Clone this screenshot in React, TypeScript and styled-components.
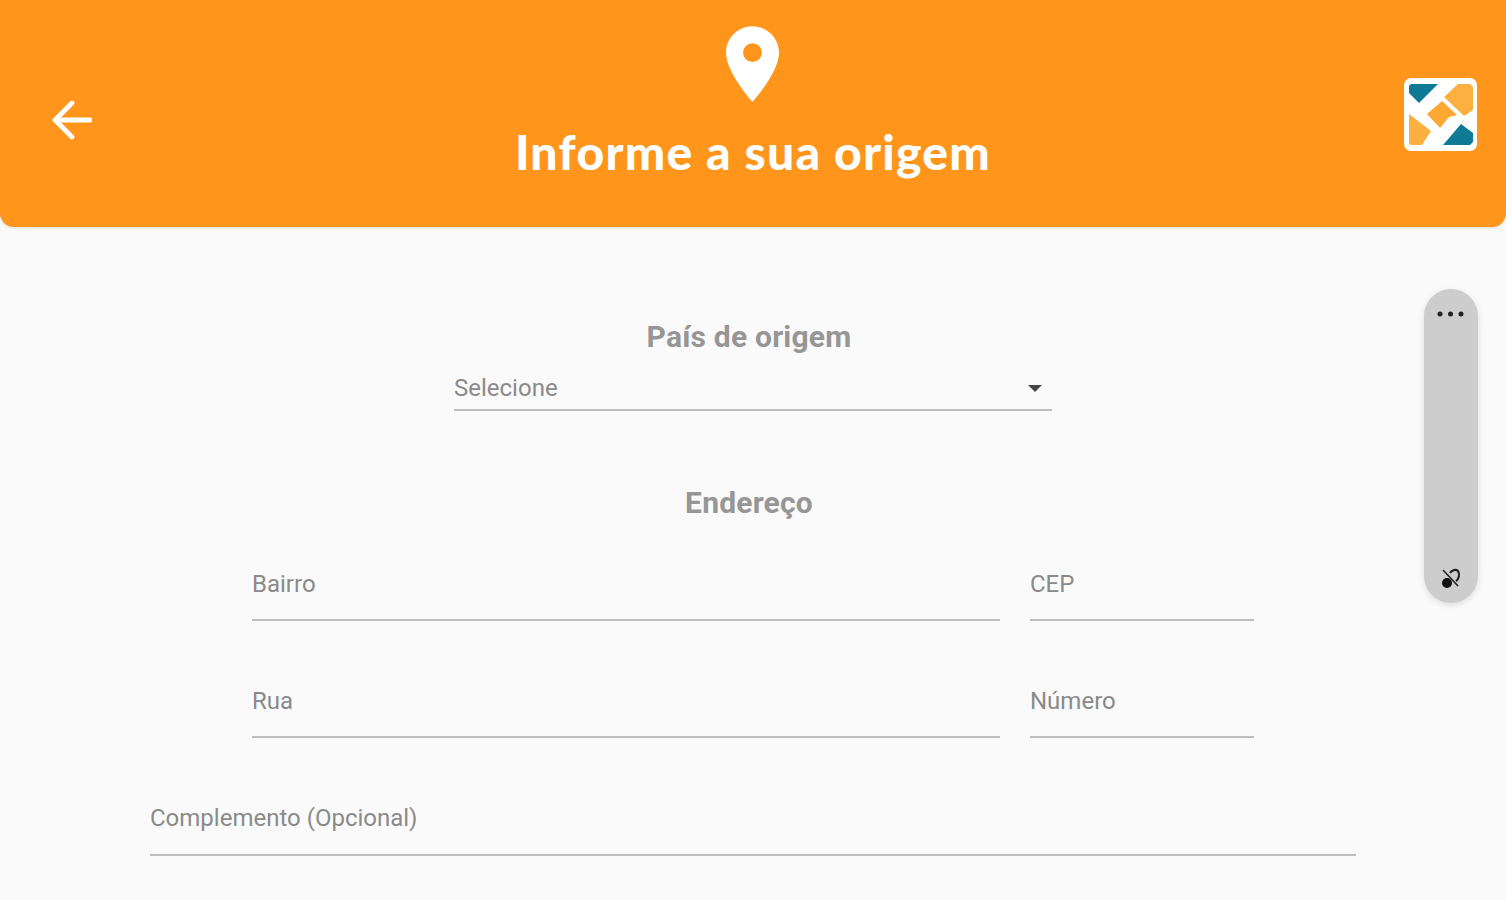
import React from "react";
import styled, { createGlobalStyle } from "styled-components";

const GlobalStyle = createGlobalStyle`
  html, body {
    margin: 0;
    padding: 0;
    height: 100%;
    overflow: hidden;
    background: #fafafa;
    font-family: Roboto, "Liberation Sans", sans-serif;
  }
`;

const App: React.FC = () => {
  return (
    <Page>
      <GlobalStyle />
      <Header>
        <BackButton aria-label="Voltar">
          <svg width="40" height="40" viewBox="0 0 40 40" fill="none" stroke="#fff" strokeWidth="4.8" strokeLinecap="round" strokeLinejoin="round">
            <path d="M3 20H38" />
            <path d="M20 3L3 20L20 37" />
          </svg>
        </BackButton>
        <HeaderCenter>
          <svg width="53" height="76" viewBox="5 2 14 20" fill="#fff">
            <path d="M12 2C8.13 2 5 5.13 5 9c0 5.25 7 13 7 13s7-7.75 7-13c0-3.87-3.13-7-7-7zm0 9.5a2.5 2.5 0 010-5 2.5 2.5 0 010 5z" />
          </svg>
          <Title>Informe a sua origem</Title>
        </HeaderCenter>
        <Logo viewBox="0 0 73 73">
          <rect width="73" height="73" rx="7" fill="#fff" />
          <path d="M7 6H34L15 25L5 15V8Z" fill="#0f7a96" />
          <path d="M57 46L69 55V64L66 67H39Z" fill="#0f7a96" />
          <path d="M5 36L27 53L18 67H7L5 65Z" fill="#fdb03f" />
          <path d="M54 6H66L69 9V32L60 38L40 19Z" fill="#fdb03f" />
          <path d="M23 36L38 23L53 37L45 39L36 50Z" fill="#fda833" />
        </Logo>
      </Header>

      <Form>
        <SectionTitle>País de origem</SectionTitle>
        <SelectField>
          <FieldLabel>Selecione</FieldLabel>
          <Caret />
        </SelectField>

        <AddressTitle>Endereço</AddressTitle>
        <FieldRow>
          <Field $grow><FieldLabel>Bairro</FieldLabel></Field>
          <Field><FieldLabel>CEP</FieldLabel></Field>
        </FieldRow>
        <FieldRow>
          <Field $grow><FieldLabel>Rua</FieldLabel></Field>
          <Field><FieldLabel>Número</FieldLabel></Field>
        </FieldRow>
        <WideField><FieldLabel>Complemento (Opcional)</FieldLabel></WideField>
      </Form>

      <SidePill>
        <svg width="28" height="6" viewBox="0 0 28 6" fill="#222">
          <circle cx="3" cy="3" r="2.5" />
          <circle cx="13.5" cy="3" r="2.5" />
          <circle cx="24" cy="3" r="2.5" />
        </svg>
        <svg width="20" height="22" viewBox="0 0 20 22" fill="none" stroke="#222" strokeWidth="2.2">
          <circle cx="6" cy="16" r="5" fill="#111" stroke="none" />
          <path d="M2 3L17 19" strokeWidth="1.6" />
          <path d="M9 6C11 3 15 2 17 4C19 7 18 12 15 14" />
        </svg>
      </SidePill>
    </Page>
  );
};

export default App;

const Page = styled.div`
  position: relative;
  width: 1506px;
  height: 900px;
  overflow: hidden;
  background: #fafafa;
`;

const Header = styled.header`
  display: grid;
  grid-template-columns: 1fr auto 1fr;
  box-sizing: border-box;
  height: 227px;
  padding: 26px 29px 0;
  background: #ff951b;
  border-radius: 0 0 14px 14px;
  box-shadow: 0 1px 3px rgba(0, 0, 0, 0.12);
`;

const BackButton = styled.button`
  justify-self: start;
  width: 40px;
  height: 40px;
  margin: 74px 0 0 23px;
  padding: 0;
  border: 0;
  background: none;
`;

const HeaderCenter = styled.div`
  display: flex;
  flex-direction: column;
  align-items: center;
  gap: 20px;
`;

const Title = styled.h1`
  margin: 0;
  color: #fff;
  font-family: Lato, "Liberation Sans", sans-serif;
  font-size: 48px;
  line-height: 60px;
  font-weight: 900;
  letter-spacing: 1.25px;
`;

const Logo = styled.svg`
  justify-self: end;
  width: 73px;
  height: 73px;
  margin-top: 52px;
`;

const Form = styled.main`
  display: flex;
  flex-direction: column;
  align-items: center;
  padding-top: 92px;
`;

const SectionTitle = styled.h2`
  margin: 0 8px 0 0;
  color: #969696;
  font-size: 30px;
  line-height: 36px;
  font-weight: 700;
  letter-spacing: 0.2px;
`;

const AddressTitle = styled(SectionTitle)`
  margin-top: 74px;
  margin-bottom: 47px;
`;

const FieldLabel = styled.span`
  color: #8a8a8a;
  font-size: 24px;
  line-height: 28px;
`;

const Field = styled.div<{ $grow?: boolean }>`
  box-sizing: border-box;
  display: flex;
  align-items: flex-end;
  flex: ${(p) => (p.$grow ? "1" : "0 0 224px")};
  height: 53px;
  padding-bottom: 21px;
  border-bottom: 2px solid #bdbdbd;
`;

const SelectField = styled(Field)`
  flex: none;
  justify-content: space-between;
  width: 598px;
  height: 53px;
  margin-top: 3px;
  padding-bottom: 7px;
`;

const Caret = styled.span`
  width: 0;
  height: 0;
  margin: 0 10px 10px 0;
  border-left: 7px solid transparent;
  border-right: 7px solid transparent;
  border-top: 7px solid #444;
`;

const FieldRow = styled.div`
  display: flex;
  gap: 30px;
  width: 1002px;
  margin-bottom: 64px;
`;

const WideField = styled(Field)`
  flex: none;
  width: 1206px;
  height: 54px;
  padding-bottom: 22px;
`;

const SidePill = styled.aside`
  position: absolute;
  top: 289px;
  left: 1424px;
  box-sizing: border-box;
  display: flex;
  flex-direction: column;
  align-items: center;
  justify-content: space-between;
  width: 54px;
  height: 314px;
  padding: 22px 0 14px;
  background: #cdcdcd;
  border-radius: 27px;
  box-shadow: 0 2px 6px rgba(0, 0, 0, 0.12);
`;
